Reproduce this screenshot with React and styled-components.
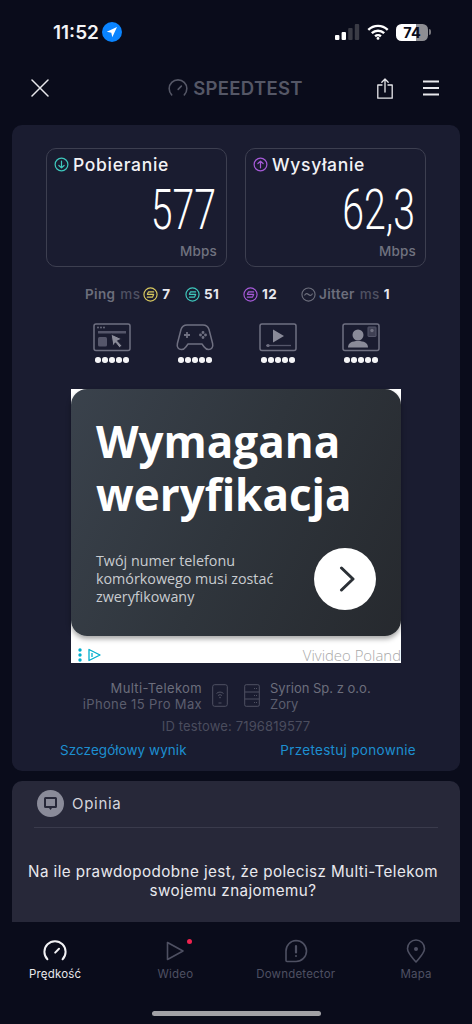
import React from "react";
import styled, { createGlobalStyle } from "styled-components";

const Global = createGlobalStyle`
  html, body { margin: 0; padding: 0; background: #0a0c1b; }
  * { box-sizing: border-box; }
`;

const Page = styled.div`
  width: 472px; height: 1024px; overflow: hidden; background: #0a0c1b;
  display: flex; flex-direction: column;
  font-family: "Inter", "Noto Sans", sans-serif; color: #fff;
`;
const StatusBar = styled.div`
  height: 64px; flex: none; display: flex; align-items: center; justify-content: space-between;
  padding: 0 41px 0 53px;
`;
const StatusLeft = styled.div`display: flex; align-items: center; gap: 3px;`;
const Time = styled.span`font-size: 19px; font-weight: 600; color: #f4f4f6;`;
const StatusRight = styled.div`display: flex; align-items: center; gap: 7px;`;
const Battery = styled.div`
  width: 32px; height: 17px; border-radius: 5.5px; overflow: hidden;
  background: linear-gradient(90deg, #fff 0 64%, #8e8e93 64% 100%);
  color: #0a0c1b; font-size: 14.5px; font-weight: 700; display: flex; align-items: center; justify-content: center;
`;
const BatteryNub = styled.div`width: 2px; height: 6px; margin-left: -6px; background: #77777c; border-radius: 0 2px 2px 0;`;
const Header = styled.div`
  height: 48px; flex: none; display: grid; grid-template-columns: 1fr auto 1fr; align-items: center;
  padding: 0 33px 0 31px;
`;
const HeaderRight = styled.div`display: flex; justify-content: flex-end; align-items: center; gap: 30px;`;
const Logo = styled.div`display: flex; align-items: center; gap: 5px; margin-left: 1px;`;
const LogoText = styled.span`font-size: 18.5px; font-weight: 600; color: #555766; letter-spacing: .3px;`;

const ResultCard = styled.section`
  margin: 13px 12px 0; height: 646px; flex: none; background: #1a1c30; border-radius: 10px;
  padding: 23px 34px 0; display: flex; flex-direction: column;
`;
const Speeds = styled.div`display: grid; grid-template-columns: 181px 181px; justify-content: space-between; gap: 18px;`;
const SpeedBox = styled.div`
  height: 119px; border: 1px solid #3d3f50; border-radius: 10px; padding: 5px 9px 0 7px;
  display: flex; flex-direction: column;
`;
const SpeedHead = styled.div`display: flex; align-items: center; gap: 4px; font-size: 17.5px; font-weight: 500; color: #f2f2f5; letter-spacing: .7px;`;
const SpeedValue = styled.div`
  font-family: "Roboto", sans-serif; font-weight: 300; font-size: 56px; line-height: 50px; color: #fff; text-align: right;
  transform: scaleX(.7); transform-origin: right center; margin: 10px 1px 0 0; white-space: nowrap;
`;
const Unit = styled.div`font-size: 13.5px; font-weight: 500; color: #70727f; text-align: right; margin-top: 8px; letter-spacing: .2px;`;

const Metrics = styled.div`
  display: flex; align-items: center; height: 20px; margin: 17px 0 0 39px; font-size: 13.5px; font-weight: 600; color: #6c6e7c; white-space: nowrap; letter-spacing: .35px;
`;
const Metric = styled.div`display: flex; align-items: center; gap: 3px; width: ${p => p.$w}px;`;
const Muted = styled.span`color: #4f5162; font-weight: 500; margin-left: 2px;`;
const Val = styled.span`color: #e9e9ee; font-weight: 700; margin-left: 1px;`;

const Quality = styled.div`display: grid; grid-template-columns: repeat(4, 83px); margin: 19px 0 0 47px;`;
const QualityItem = styled.div`display: flex; flex-direction: column; align-items: center; width: 38px; gap: 5px;`;
const Dots = styled.div`display: flex; gap: 1.4px;`;
const Dot = styled.i`width: 5.6px; height: 5.6px; border-radius: 50%; background: #f4f4f6; display: block;`;

const Ad = styled.div`
  width: 330px; height: 274px; margin: 26px 0 0 25px; flex: none; background: #fff; display: flex; flex-direction: column; position: relative;
  font-family: "Open Sans", sans-serif;
`;
const AdCard = styled.div`
  height: 247px; flex: none; border-radius: 16px; padding: 26px 25px 0; position: relative;
  background: linear-gradient(115deg, #3a424c 0%, #2f353c 50%, #26292e 100%);
  box-shadow: 0 3px 5px rgba(0,0,0,.35);
`;
const AdTitle = styled.div`font-size: 44px; line-height: 53px; font-weight: 700; color: #fff;`;
const AdBody = styled.div`font-size: 14.3px; line-height: 18px; color: #c9ccd0; margin-top: 31px; width: 210px;`;
const AdButton = styled.div`
  position: absolute; left: 243px; top: 159px; width: 62px; height: 62px; border-radius: 50%; background: #fff;
  display: flex; align-items: center; justify-content: center; padding-left: 3px;
`;
const AdFoot = styled.div`flex: 1; display: flex; align-items: flex-end; justify-content: space-between; padding: 0 0 0 7px;`;
const AdMarks = styled.div`display: flex; align-items: center; gap: 6px; margin-bottom: 1px;`;
const Advertiser = styled.span`font-size: 14.9px; color: #a8a8a8; line-height: 16px; white-space: nowrap; font-weight: 300;`;

const Info = styled.div`display: grid; grid-template-columns: 1fr auto auto 1fr; align-items: center; margin-top: 17px; column-gap: 10px; width: 380px;`;
const InfoText = styled.div`
  font-size: 13px; line-height: 16px; text-align: ${p => p.$right ? "right" : "left"}; color: #5c5e6e; white-space: nowrap; font-weight: 400;
  letter-spacing: ${p => p.$right ? ".35px" : "0"};
`;
const InfoMain = styled.div`color: #6c6e7c;`;
const TestId = styled.div`font-size: 13px; line-height: 16px; color: #4b4d5e; text-align: center; margin-top: 6px; letter-spacing: .15px;`;
const Links = styled.div`display: flex; justify-content: space-between; margin: 8px 10px 0 14px;`;
const LinkText = styled.a`font-size: 13.5px; color: #1d8fd0; letter-spacing: ${p => p.$s}px;`;

const Opinion = styled.section`
  margin: 10px 12px 0; height: 141px; flex: none; background: #272839; border-radius: 10px 10px 0 0; padding: 9px 22px 0;
`;
const OpinionHead = styled.div`
  display: flex; align-items: center; gap: 8px; padding: 0 3px 10px; border-bottom: 1px solid #3a3b4c;
`;
const Badge = styled.div`width: 27px; height: 27px; border-radius: 50%; background: #8a8b99; display: flex; align-items: center; justify-content: center;`;
const OpinionTitle = styled.span`font-size: 15px; color: #d6d6dc; letter-spacing: .7px;`;
const Question = styled.p`
  margin: 34px -10px 0 -16px; font-size: 15.2px; line-height: 19px; text-align: center; color: #e9e9ee; white-space: nowrap; letter-spacing: .42px;
`;

const Nav = styled.nav`flex: 1; display: grid; grid-template-columns: repeat(4, 120.3px); margin-left: -5px; padding-top: 17px; position: relative;`;
const NavItem = styled.div`
  display: flex; flex-direction: column; align-items: center; gap: 4px; font-size: 11.5px; height: 52px; letter-spacing: .2px;
  color: ${p => p.$on ? "#e8e8ec" : "#4e5062"}; position: relative;
`;
const NotifyDot = styled.span`position: absolute; width: 5px; height: 5px; border-radius: 50%; background: #f0234f; left: 72px; top: 0;`;
const HomeBar = styled.div`position: absolute; left: 157px; bottom: 8px; width: 169px; height: 5px; border-radius: 3px; background: #a1a1a6;`;

const ArrowCircle = ({ color, up }) => (
  <svg width="15" height="15" viewBox="0 0 16 16" fill="none" stroke={color} strokeWidth="1.3" strokeLinecap="round" strokeLinejoin="round">
    <circle cx="8" cy="8" r="6.8" />
    {up ? <path d="M8 11.5v-7M5.2 7 8 4.4 10.8 7" /> : <path d="M8 4.5v7M5.2 9 8 11.6 10.8 9" />}
  </svg>
);
const PingIcon = ({ color }) => (
  <svg width="15" height="15" viewBox="0 0 16 16" fill="none" stroke={color} strokeWidth="1.25" strokeLinecap="round" strokeLinejoin="round">
    <circle cx="8" cy="8" r="7" />
    <path d="M11.3 5.2H5.8L4.6 7.8H11.4L10.2 10.8H4.7" />
  </svg>
);
const Gauge = ({ color, width = 20, sw = 1.6 }) => (
  <svg width={width} height={width} viewBox="0 0 24 24" fill="none" stroke={color} strokeWidth={sw} strokeLinecap="round">
    <path d="M4.4 20.2A10.6 10.6 0 1 1 19.6 20.2" />
    <path d="M12.2 13.6 16 9.8" />
  </svg>
);
const FiveDots = () => <Dots>{[0, 1, 2, 3, 4].map(i => <Dot key={i} />)}</Dots>;

export default function App() {
  return (
    <Page>
      <Global />
      <StatusBar>
        <StatusLeft>
          <Time>11:52</Time>
          <svg width="20" height="20" viewBox="0 0 20 20"><circle cx="10" cy="10" r="10" fill="#0a84ff" /><path d="M15 5 4.8 9.8l4.5.9 1 4.5z" fill="#fff" /></svg>
        </StatusLeft>
        <StatusRight>
          <svg width="25" height="16" viewBox="0 0 25 16"><rect x="0" y="11" width="4.4" height="5" rx="1" fill="#fff" /><rect x="6.6" y="8" width="4.4" height="8" rx="1" fill="#fff" /><rect x="13.2" y="4" width="4.4" height="12" rx="1" fill="#3a3b45" /><rect x="19.8" y="0" width="4.4" height="16" rx="1" fill="#3a3b45" /></svg>
          <svg width="22" height="16" viewBox="0 0 22 16" fill="none" stroke="#fff" strokeWidth="2.4"><path d="M1.3 5.8a14 14 0 0 1 19.4 0" /><path d="M4.8 9.2a9 9 0 0 1 12.4 0" /><path d="M8.1 12.4a4.2 4.2 0 0 1 5.8 0" /><circle cx="11" cy="14.4" r="1.4" fill="#fff" stroke="none" /></svg>
          <Battery>74</Battery>
          <BatteryNub />
        </StatusRight>
      </StatusBar>
      <Header>
        <svg width="18" height="18" viewBox="0 0 18 18" stroke="#e8e8ec" strokeWidth="1.5" strokeLinecap="round"><path d="M1 1l16 16M17 1 1 17" /></svg>
        <Logo>
          <Gauge color="#555766" sw={1.9} />
          <LogoText>SPEEDTEST</LogoText>
        </Logo>
        <HeaderRight>
          <svg width="16" height="21" viewBox="0 0 16 21" fill="none" stroke="#e8e8ec" strokeWidth="1.3" strokeLinecap="round" strokeLinejoin="round"><path d="M5 7H.8v13.2h14.4V7H11" /><path d="M8 14V1M4.8 4.2 8 1l3.2 3.2" /></svg>
          <svg width="16" height="16" viewBox="0 0 16 16" stroke="#e8e8ec" strokeWidth="1.8"><path d="M0 1.5h16M0 8h16M0 14.5h16" /></svg>
        </HeaderRight>
      </Header>

      <ResultCard>
        <Speeds>
          <SpeedBox>
            <SpeedHead><ArrowCircle color="#3ec8bd" />Pobieranie</SpeedHead>
            <SpeedValue>577</SpeedValue>
            <Unit>Mbps</Unit>
          </SpeedBox>
          <SpeedBox>
            <SpeedHead><ArrowCircle color="#a65ad8" up />Wysyłanie</SpeedHead>
            <SpeedValue>62,3</SpeedValue>
            <Unit>Mbps</Unit>
          </SpeedBox>
        </Speeds>

        <Metrics>
          <Metric $w={100}>Ping <Muted>ms</Muted><PingIcon color="#d9c95f" /><Val>7</Val></Metric>
          <Metric $w={58}><PingIcon color="#3ec8bd" /><Val>51</Val></Metric>
          <Metric $w={58}><PingIcon color="#a65ad8" /><Val>12</Val></Metric>
          <Metric $w={90}>
            <svg width="15" height="15" viewBox="0 0 16 16" fill="none" stroke="#6c6e7c" strokeWidth="1.2" strokeLinecap="round"><circle cx="8" cy="8" r="7" /><path d="M4 8.6c1.3-2 2.6-2 4-.6s2.7 1.4 4-.6" /></svg>
            Jitter <Muted>ms</Muted><Val>1</Val>
          </Metric>
        </Metrics>

        <Quality>
          <QualityItem>
            <svg width="38" height="29" viewBox="0 0 38 29" fill="none"><rect x="1" y="1" width="36" height="26.5" rx="2" stroke="#6f7081" strokeWidth="1.5" /><rect x="5" y="8" width="28" height="2.5" fill="#55566a" /><rect x="5" y="14" width="9" height="9.5" rx="1.5" fill="#55566a" /><circle cx="5" cy="4.5" r=".9" fill="#6f7081" /><circle cx="8" cy="4.5" r=".9" fill="#6f7081" /><circle cx="11" cy="4.5" r=".9" fill="#6f7081" /><path d="M18 11l11 5-4.5 1.8 4.5 5-2.6 2-4-5-2.4 3.5z" fill="#8a8b99" stroke="#1a1c30" strokeWidth="1" /></svg>
            <FiveDots />
          </QualityItem>
          <QualityItem>
            <svg width="38" height="29" viewBox="0 0 38 29" fill="none" stroke="#6f7081" strokeWidth="1.5" strokeLinejoin="round"><path d="M11 2h16c3.5 0 5 1.5 6 4.5l3.6 14c.8 3.5-1 6-4 6-2 0-3.300-1-4.600-2.800l-2-2.700H12l-2 2.700C8.700 25.500 7.400 26.500 5.400 26.500c-3 0-4.800-2.500-4-6L5 6.500C6 3.500 7.500 2 11 2z" /><path d="M11 9v6M8 12h6" strokeWidth="1.8" /><circle cx="27" cy="9.5" r=".7" /><circle cx="27" cy="14.5" r=".7" /><circle cx="24.5" cy="12" r=".7" /><circle cx="29.5" cy="12" r=".7" /></svg>
            <FiveDots />
          </QualityItem>
          <QualityItem>
            <svg width="38" height="29" viewBox="0 0 38 29" fill="none"><rect x="1" y="1" width="36" height="26.5" rx="2" stroke="#6f7081" strokeWidth="1.5" /><path d="M14 6.500 25 13 14 19.500z" fill="#8a8b99" /><path d="M7 22.500h25" stroke="#55566a" strokeWidth="1.3" /><circle cx="9" cy="22.5" r="1.6" fill="#6f7081" /></svg>
            <FiveDots />
          </QualityItem>
          <QualityItem>
            <svg width="38" height="29" viewBox="0 0 38 29" fill="none"><rect x="1" y="1" width="36" height="26.5" rx="2" stroke="#6f7081" strokeWidth="1.5" /><circle cx="16" cy="12" r="5.5" fill="#8a8b99" /><path d="M6 24.500c0-4.500 4-6.500 10-6.500s10 2 10 6.500z" fill="#8a8b99" /><rect x="26" y="4" width="8" height="9.500" rx=".5" fill="#3f4054" stroke="#55566a" strokeWidth="1" /><circle cx="30" cy="7.500" r="1.700" fill="#6f7081" /></svg>
            <FiveDots />
          </QualityItem>
        </Quality>

        <Ad>
          <AdCard>
            <AdTitle>Wymagana<br />weryfikacja</AdTitle>
            <AdBody>Twój numer telefonu komórkowego musi zostać zweryfikowany</AdBody>
            <AdButton>
              <svg width="16" height="26" viewBox="0 0 16 26" fill="none" stroke="#2b3036" strokeWidth="3" strokeLinecap="round" strokeLinejoin="round"><path d="M2.500 2 14 13 2.500 24" /></svg>
            </AdButton>
          </AdCard>
          <AdFoot>
            <AdMarks>
              <svg width="4" height="14" viewBox="0 0 4 14" fill="#00aecd"><circle cx="2" cy="2" r="1.7" /><circle cx="2" cy="7" r="1.7" /><circle cx="2" cy="12" r="1.7" /></svg>
              <svg width="13" height="14" viewBox="0 0 13 14" fill="none" stroke="#00aecd" strokeWidth="1.3" strokeLinejoin="round"><path d="M1 1.500 12 7 1 12.500z" /><path d="M4 5v4" /></svg>
            </AdMarks>
            <Advertiser>Vivideo Poland</Advertiser>
          </AdFoot>
        </Ad>

        <Info>
          <InfoText $right><InfoMain>Multi-Telekom</InfoMain>iPhone 15 Pro Max</InfoText>
          <svg width="16" height="23" viewBox="0 0 16 23" fill="none" stroke="#4f5162" strokeWidth="1"><rect x=".7" y=".7" width="14.6" height="21.6" rx="2" /><path d="M4.500 9.500a5 5 0 0 1 7 0M6 11.500a3 3 0 0 1 4 0" /><circle cx="8" cy="13.5" r=".5" /><path d="M6.500 19h3" /></svg>
          <svg width="16" height="23" viewBox="0 0 16 23" fill="none" stroke="#4f5162" strokeWidth="1" style={{ marginLeft: 6 }}><rect x=".7" y=".7" width="14.6" height="21.6" rx="1.5" /><path d="M.7 8h14.6M.7 15h14.6" /><path d="M10 4.500h3M10 11.500h3M10 18.500h3" strokeDasharray="1 1" /></svg>
          <InfoText><InfoMain>Syrion Sp. z o.o.</InfoMain>Zory</InfoText>
        </Info>
        <TestId>ID testowe: 7196819577</TestId>
        <Links>
          <LinkText $s={0.05}>Szczegółowy wynik</LinkText>
          <LinkText $s={0.3}>Przetestuj ponownie</LinkText>
        </Links>
      </ResultCard>

      <Opinion>
        <OpinionHead>
          <Badge>
            <svg width="15" height="15" viewBox="0 0 15 15"><path d="M2.500 1h10A1.500 1.500 0 0 1 14 2.500v8a1.500 1.500 0 0 1-1.500 1.500H9l-1.500 2L6 12H2.500A1.500 1.500 0 0 1 1 10.500v-8A1.500 1.500 0 0 1 2.500 1z" fill="#272839" /><rect x="3" y="3" width="9" height="7" fill="#8a8b99" /></svg>
          </Badge>
          <OpinionTitle>Opinia</OpinionTitle>
        </OpinionHead>
        <Question>Na ile prawdopodobne jest, że polecisz Multi-Telekom<br />swojemu znajomemu?</Question>
      </Opinion>

      <Nav>
        <NavItem $on>
          <Gauge color="#f2f2f5" width={24} sw={2} />
          Prędkość
        </NavItem>
        <NavItem>
          <svg width="24" height="24" viewBox="0 0 24 24" fill="none" stroke="#4e5062" strokeWidth="1.6" strokeLinejoin="round"><path d="M4.500 3.500v17L20 12z" /></svg>
          <NotifyDot />
          Wideo
        </NavItem>
        <NavItem>
          <svg width="24" height="24" viewBox="0 0 24 24" fill="none" stroke="#4e5062" strokeWidth="1.6" strokeLinecap="round"><path d="M12 1.500A10.500 10.500 0 1 1 12 22.500H3a1 1 0 0 1-1-1V12A10.500 10.500 0 0 1 12 1.500z" /><path d="M12 7v6.500" strokeWidth="2.2" /><circle cx="12" cy="17" r="1" fill="#4e5062" stroke="none" /></svg>
          Downdetector
        </NavItem>
        <NavItem>
          <svg width="24" height="24" viewBox="0 0 24 24" fill="none" stroke="#4e5062" strokeWidth="1.6" strokeLinejoin="round"><path d="M12 23C7 17 3.500 14 3.500 9.500a8.500 8.500 0 0 1 17 0C20.500 14 17 17 12 23z" /><circle cx="12" cy="10" r="2" fill="#4e5062" stroke="none" /></svg>
          Mapa
        </NavItem>
        <HomeBar />
      </Nav>
    </Page>
  );
}
